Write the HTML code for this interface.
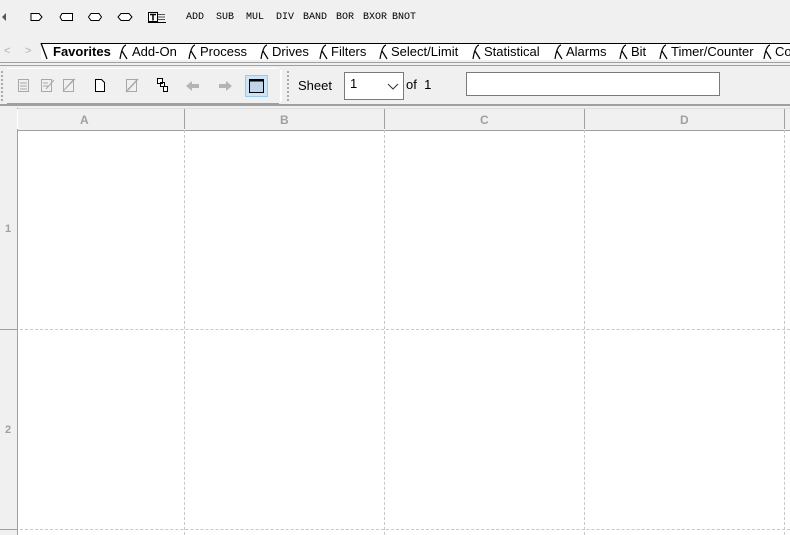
<!DOCTYPE html>
<html><head><meta charset="utf-8"><style>
body{margin:0;width:790px;height:535px;overflow:hidden;background:#f0f0f0;font-family:"Liberation Sans",sans-serif;position:relative}
.a{position:absolute}
.m{font-family:"Liberation Mono",monospace;font-size:10px;top:12px;color:#000}
.t{font-size:13px;top:44px;color:#000}
.h{color:#a0a0a0;font-weight:bold;font-size:12px}
</style></head><body>
<svg class="a" style="left:0;top:0" width="180" height="30">
<path d="M2 17 L6 13 L6 21Z" fill="#555"/>
<path d="M31 13.5 H39 L42 17 L39 20.5 H31Z" fill="#fff" stroke="#000"/>
<path d="M62 13.5 H72.5 V20.5 H62 L60 17Z" fill="#fff" stroke="#000"/>
<path d="M91 13.5 H99 L101.5 17 L99 20.5 H91 L88.5 17Z" fill="#fff" stroke="#000"/>
<path d="M121 13.5 H129 L132 17 L129 20.5 H121 L118 17Z" fill="#fff" stroke="#000"/>
<rect x="148.5" y="12.5" width="9" height="9" fill="#fff" stroke="#000"/><path d="M150 14.5h6M153 14.5v6" stroke="#000" stroke-width="1.5"/><path d="M158 14.5h7M158 17h7M158 19.5h7" stroke="#555"/><path d="M148 22.5h18" stroke="#000"/>
</svg>
<div class="a m" style="left:186px">ADD</div>
<div class="a m" style="left:216px">SUB</div>
<div class="a m" style="left:246px">MUL</div>
<div class="a m" style="left:276px">DIV</div>
<div class="a m" style="left:303px">BAND</div>
<div class="a m" style="left:336px">BOR</div>
<div class="a m" style="left:363px">BXOR</div>
<div class="a m" style="left:392px">BNOT</div>
<div class="a" style="left:41px;top:43px;width:749px;height:16px;background:#fff;border-top:1px solid #000"></div>
<div class="a" style="left:4px;top:45px;color:#b0b0b0;font-size:11px">&lt;</div>
<div class="a" style="left:25px;top:45px;color:#b0b0b0;font-size:11px">&gt;</div>
<svg class="a" style="left:0;top:42px" width="790" height="20">
<path d="M41 1 L47 17" stroke="#000" stroke-width="1.3" fill="none"/>
<g fill="none" stroke="#000" stroke-width="1.2">
<path d="M126 3 Q122 4 120 17 M122 9 L127 17"/>
<path d="M195 3 Q191 4 189 17 M191 9 L196 17"/>
<path d="M267 3 Q263 4 261 17 M263 9 L268 17"/>
<path d="M326 3 Q322 4 320 17 M322 9 L327 17"/>
<path d="M386 3 Q382 4 380 17 M382 9 L387 17"/>
<path d="M479 3 Q475 4 473 17 M475 9 L480 17"/>
<path d="M561 3 Q557 4 555 17 M557 9 L562 17"/>
<path d="M626 3 Q622 4 620 17 M622 9 L627 17"/>
<path d="M666 3 Q662 4 660 17 M662 9 L667 17"/>
<path d="M770 3 Q766 4 764 17 M766 9 L771 17"/>
</g></svg>
<div class="a t" style="left:53px;font-weight:bold">Favorites</div>
<div class="a t" style="left:132px">Add-On</div>
<div class="a t" style="left:200px">Process</div>
<div class="a t" style="left:272px">Drives</div>
<div class="a t" style="left:331px">Filters</div>
<div class="a t" style="left:391px">Select/Limit</div>
<div class="a t" style="left:484px">Statistical</div>
<div class="a t" style="left:566px">Alarms</div>
<div class="a t" style="left:631px">Bit</div>
<div class="a t" style="left:671px">Timer/Counter</div>
<div class="a t" style="left:775px">Co</div>
<div class="a" style="left:0;top:62px;width:790px;height:1px;background:#a0a0a0"></div>
<div class="a" style="left:0;top:65px;width:790px;height:1px;background:#a0a0a0"></div>
<div class="a" style="left:7px;top:68px;width:272px;height:34px;border-bottom:2px solid #a0a0a0;border-top:1px solid #fff"></div>
<div class="a" style="left:1px;top:71px;width:3px;height:30px;border-left:2px dotted #aaa"></div>
<div class="a" style="left:287px;top:71px;width:3px;height:30px;border-left:2px dotted #aaa"></div>
<div class="a" style="left:280px;top:70px;width:2px;height:32px;background:#fff"></div>
<svg class="a" style="left:0;top:70px" width="280" height="32">
<g stroke="#a8a8a8" fill="none"><rect x="18.5" y="9.5" width="10" height="12"/><path d="M20 13h7M20 16h7M20 19h7"/>
<rect x="41.5" y="9.5" width="10" height="12"/><path d="M43 13h5M43 16h5M46 19l8-9"/>
<rect x="63.5" y="9.5" width="10" height="12"/><path d="M63 21l12-12M65 19l9-10"/></g>
<path d="M95.5 9.5h6l3 3v9h-9z" fill="#fff" stroke="#000"/>
<rect x="126.5" y="9.5" width="10" height="12" fill="none" stroke="#a8a8a8"/><path d="M126 22l12-13" stroke="#a8a8a8" stroke-width="1.5"/>
<path d="M157.5 8.5h5v5h-5zM160.5 12.5h4v4h-4zM163.5 16.5h4v5h-4z" fill="#fff" stroke="#000"/>
<path d="M186 16l6-5v3h7v4h-7v3z" fill="#b4b4b4"/>
<path d="M232 16l-6-5v3h-7v4h7v3z" fill="#b4b4b4"/>
<rect x="245.5" y="5.5" width="22" height="21" fill="#cce4f7" stroke="#99c9ef"/>
<rect x="249.5" y="9.5" width="14" height="13" fill="#c3d3e8" stroke="#000"/><path d="M249 10.5h15" stroke="#000" stroke-width="2"/>
</svg>
<div class="a" style="left:298px;top:78px;font-size:13px">Sheet</div>
<div class="a" style="left:344px;top:72px;width:58px;height:26px;background:#fff;border:1px solid #7a7a7a"></div>
<div class="a" style="left:350px;top:76px;font-size:13px">1</div>
<svg class="a" style="left:387px;top:82px" width="12" height="8"><path d="M1 2l5 5 5-5" stroke="#333" fill="none"/></svg>
<div class="a" style="left:406px;top:77px;font-size:13px">of&nbsp; 1</div>
<div class="a" style="left:466px;top:72px;width:252px;height:22px;background:#fff;border:1px solid #7a7a7a"></div>
<div class="a" style="left:0;top:104px;width:790px;height:2px;background:#a0a0a0"></div>
<div class="a" style="left:0;top:108px;width:790px;height:427px;background:#fff"></div>
<div class="a" style="left:0;top:108px;width:790px;height:21px;background:#f0f0f0;border-bottom:1px solid #a0a0a0;border-top:1px solid #ddd"></div>
<div class="a" style="left:0;top:108px;width:17px;height:427px;background:#f0f0f0;border-right:1px solid #a0a0a0"></div>
<div class="a" style="left:17px;top:109px;width:1px;height:20px;background:#fff"></div>
<div class="a" style="left:184px;top:109px;width:1px;height:20px;background:#a0a0a0"></div>
<div class="a" style="left:384px;top:109px;width:1px;height:20px;background:#a0a0a0"></div>
<div class="a" style="left:584px;top:109px;width:1px;height:20px;background:#a0a0a0"></div>
<div class="a" style="left:784px;top:109px;width:1px;height:20px;background:#a0a0a0"></div>
<div class="a h" style="left:80px;top:113px">A</div>
<div class="a h" style="left:280px;top:113px">B</div>
<div class="a h" style="left:480px;top:113px">C</div>
<div class="a h" style="left:680px;top:113px">D</div>
<div class="a h" style="left:5px;top:223px;font-size:11px">1</div>
<div class="a h" style="left:5px;top:424px;font-size:11px">2</div>
<div class="a" style="left:0;top:329px;width:17px;height:1px;background:#a0a0a0"></div>
<div class="a" style="left:0;top:529px;width:17px;height:1px;background:#a0a0a0"></div>
<div class="a" style="left:20px;top:329px;width:770px;border-top:1px dashed #c8c8c8"></div>
<div class="a" style="left:20px;top:529px;width:770px;border-top:1px dashed #c8c8c8"></div>
<div class="a" style="left:184px;top:130px;height:405px;border-left:1px dashed #c8c8c8"></div>
<div class="a" style="left:384px;top:130px;height:405px;border-left:1px dashed #c8c8c8"></div>
<div class="a" style="left:584px;top:130px;height:405px;border-left:1px dashed #c8c8c8"></div>
<div class="a" style="left:784px;top:130px;height:405px;border-left:1px dashed #c8c8c8"></div>
</body></html>
